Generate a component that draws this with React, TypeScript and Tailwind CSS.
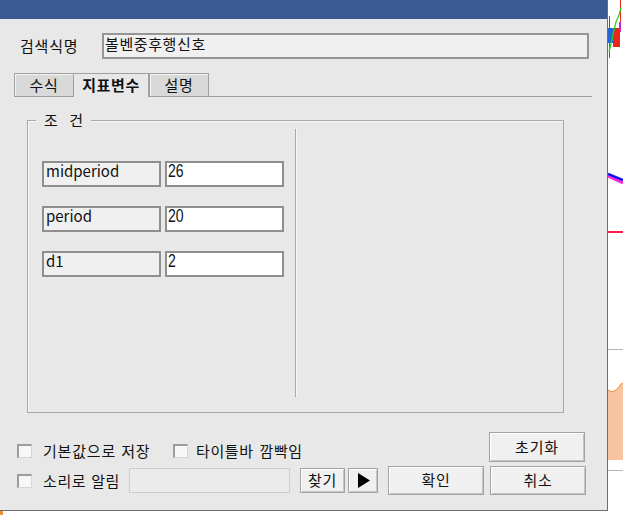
import { Fragment } from "react";

const params = [
  { name: "midperiod", value: "26" },
  { name: "period", value: "20" },
  { name: "d1", value: "2" },
];

const tabs = [
  { label: "수식", width: "w-[60px]", active: false },
  { label: "지표변수", width: "w-[75px]", active: true },
  { label: "설명", width: "w-[60px]", active: false },
];

function CheckBox() {
  return (
    <span className="w-[15px] h-[14px] shrink-0 bg-[#f7f7f7] border-t-2 border-l-2 border-[#9d9d9d] border-r border-b border-r-[#d6d6d6] border-b-[#d6d6d6]" />
  );
}

function Button({ label, className }: { label: React.ReactNode; className: string }) {
  return (
    <div
      className={
        "shrink-0 flex items-center justify-center bg-[#f0f0f0] border border-[#a3a3a3] shadow-[inset_1px_1px_0_#ffffff,inset_-1px_-1px_0_#c4c4c4] text-[15px] tracking-[0.8px] text-[#111] " +
        className
      }
    >
      {label}
    </div>
  );
}

// right-hand strip of the price chart peeking out behind the dialog
function ChartStrip() {
  return (
    <svg width="15" height="519" viewBox="0 0 15 519" className="shrink-0 block">
      <rect x="0" y="0" width="15" height="519" fill="#ffffff" />
      <line x1="12.5" y1="0" x2="12.5" y2="30" stroke="#e8261c" strokeWidth="1" />
      <line x1="1.5" y1="16" x2="1.5" y2="58" stroke="#1f5fd0" strokeWidth="1" />
      <rect x="0" y="28" width="5" height="15" fill="#1f66d9" />
      <rect x="5" y="28" width="7" height="19" fill="#e8261c" />
      <polyline points="1,52 3,44 6,30 8,22 11,15 13,8" fill="none" stroke="#22d41c" strokeWidth="1.2" />
      <rect x="11" y="22" width="2" height="10" fill="#c02bd0" />
      <polyline points="0,176 15,183" fill="none" stroke="#ff2ad8" strokeWidth="3" />
      <polyline points="0,174 15,180" fill="none" stroke="#1010f0" strokeWidth="2.5" />
      <rect x="0" y="231" width="15" height="2" fill="#ff1d4a" />
      <rect x="0" y="349" width="15" height="1" fill="#b5b5b5" />
      <path d="M0 390 L4 392 L8 390 L11 387 L13 384 L15 383 L15 460 L0 460 Z" fill="#f8c4a0" />
      <path d="M0 390 L4 392 L8 390 L11 387 L13 384 L15 383" fill="none" stroke="#f0883a" strokeWidth="1" />
      <rect x="0" y="470" width="15" height="1" fill="#b5b5b5" />
    </svg>
  );
}

export default function App() {
  return (
    <div className="w-[623px] h-[519px] bg-white flex overflow-hidden font-['Noto_Sans_CJK_KR',sans-serif] text-[#111]">
      <div className="w-[608px] flex flex-col">
        <div className="w-[608px] h-[511px] bg-[#e8e8e8] border-r border-b border-[#6e6e6e] flex flex-col">
          <div className="h-[19px] shrink-0 bg-[#3b5a93]" />

          {/* formula name */}
          <div className="flex items-center mt-[14px] pl-[20px] h-[26px]">
            <span className="w-[82px] text-[15px] leading-[18px] tracking-[0.8px]">검색식명</span>
            <div className="w-[487px] h-[26px] bg-[#f0f0f0] border-2 border-[#959595] px-[1px] text-[15px] leading-[17px] tracking-[0.6px]">
              볼벤중후행신호
            </div>
          </div>

          {/* tabs */}
          <div className="flex mt-[14px] ml-[14px] w-[578px] h-[24px] border-b border-[#a0a0a0]">
            {tabs.map((t) => (
              <div
                key={t.label}
                className={
                  t.active
                    ? t.width + " h-[24px] flex items-center justify-center bg-[#e8e8e8] border-t border-r border-[#a0a0a0] mb-[-1px] text-[15px] font-bold tracking-[0.6px]"
                    : t.width + " h-[23px] flex items-center justify-center bg-[#d9d9d9] border-t border-l border-r border-[#a0a0a0] shadow-[inset_1px_1px_0_#f4f4f4] text-[15px] tracking-[0.8px]"
                }
              >
                {t.label}
              </div>
            ))}
          </div>

          {/* condition group */}
          <div className="relative mt-[23px] ml-[27px] w-[537px] h-[293px] border border-[#a8a8a8] shadow-[inset_1px_1px_0_#f8f8f8] flex">
            <span className="absolute top-[-11px] left-[8px] w-[55px] bg-[#e8e8e8] text-center text-[15px] leading-[20px] [word-spacing:8px]">
              조 건
            </span>
            <div className="w-[267px] pt-[40px] pl-[14px] flex flex-col gap-[19px]">
              {params.map((p) => (
                <div key={p.name} className="flex gap-[4px]">
                  <div className="w-[119px] h-[26px] bg-[#f0f0f0] border-2 border-[#8f8f8f] pl-[2px] text-[15px] leading-[16px]">
                    {p.name}
                  </div>
                  <div className="w-[119px] h-[26px] bg-white border-2 border-[#8f8f8f] pl-[1px] flex items-start overflow-hidden">
                    <span className="block origin-left scale-x-[0.78] font-['Liberation_Sans',sans-serif] text-[18px] leading-[17px]">
                      {p.value}
                    </span>
                  </div>
                </div>
              ))}
            </div>
            <div className="mt-[8px] h-[268px] w-[2px] border-l border-[#a8a8a8] bg-[#f6f6f6]" />
          </div>

          {/* options and actions */}
          <div className="flex items-end mt-[19px] h-[30px] pl-[17px] pr-[22px]">
            <div className="flex items-center pb-[2px]">
              <CheckBox />
              <span className="ml-[11px] w-[130px] text-[15px] leading-[18px] tracking-[0.8px] [word-spacing:1px]">기본값으로 저장</span>
              <CheckBox />
              <span className="ml-[8px] text-[15px] leading-[18px] tracking-[0.6px] [word-spacing:2px]">타이틀바 깜빡임</span>
            </div>
            <div className="flex-1" />
            <Button label="초기화" className="w-[96px] h-[30px]" />
          </div>
          <div className="flex items-center mt-[4px] h-[29px] pl-[17px]">
            <CheckBox />
            <span className="ml-[11px] w-[86px] text-[15px] leading-[18px] tracking-[0.6px] [word-spacing:1px]">소리로 알림</span>
            <div className="w-[161px] h-[25px] bg-[#ebebeb] border border-[#cdcdcd]" />
            <Button label="찾기" className="ml-[10px] w-[45px] h-[25px]" />
            <Button
              label={
                <Fragment>
                  <svg width="13" height="15" viewBox="0 0 13 15">
                    <path d="M1 0 L13 7.5 L1 15 Z" fill="#000" />
                  </svg>
                </Fragment>
              }
              className="ml-[3px] w-[30px] h-[25px]"
            />
            <Button label="확인" className="ml-[10px] w-[96px] h-[29px]" />
            <Button label="취소" className="ml-[6px] w-[96px] h-[29px]" />
          </div>
        </div>
        <div className="h-[8px] flex">
          <span className="w-[3px] h-[4px] bg-[#f08a30]" />
        </div>
      </div>
      <ChartStrip />
    </div>
  );
}
